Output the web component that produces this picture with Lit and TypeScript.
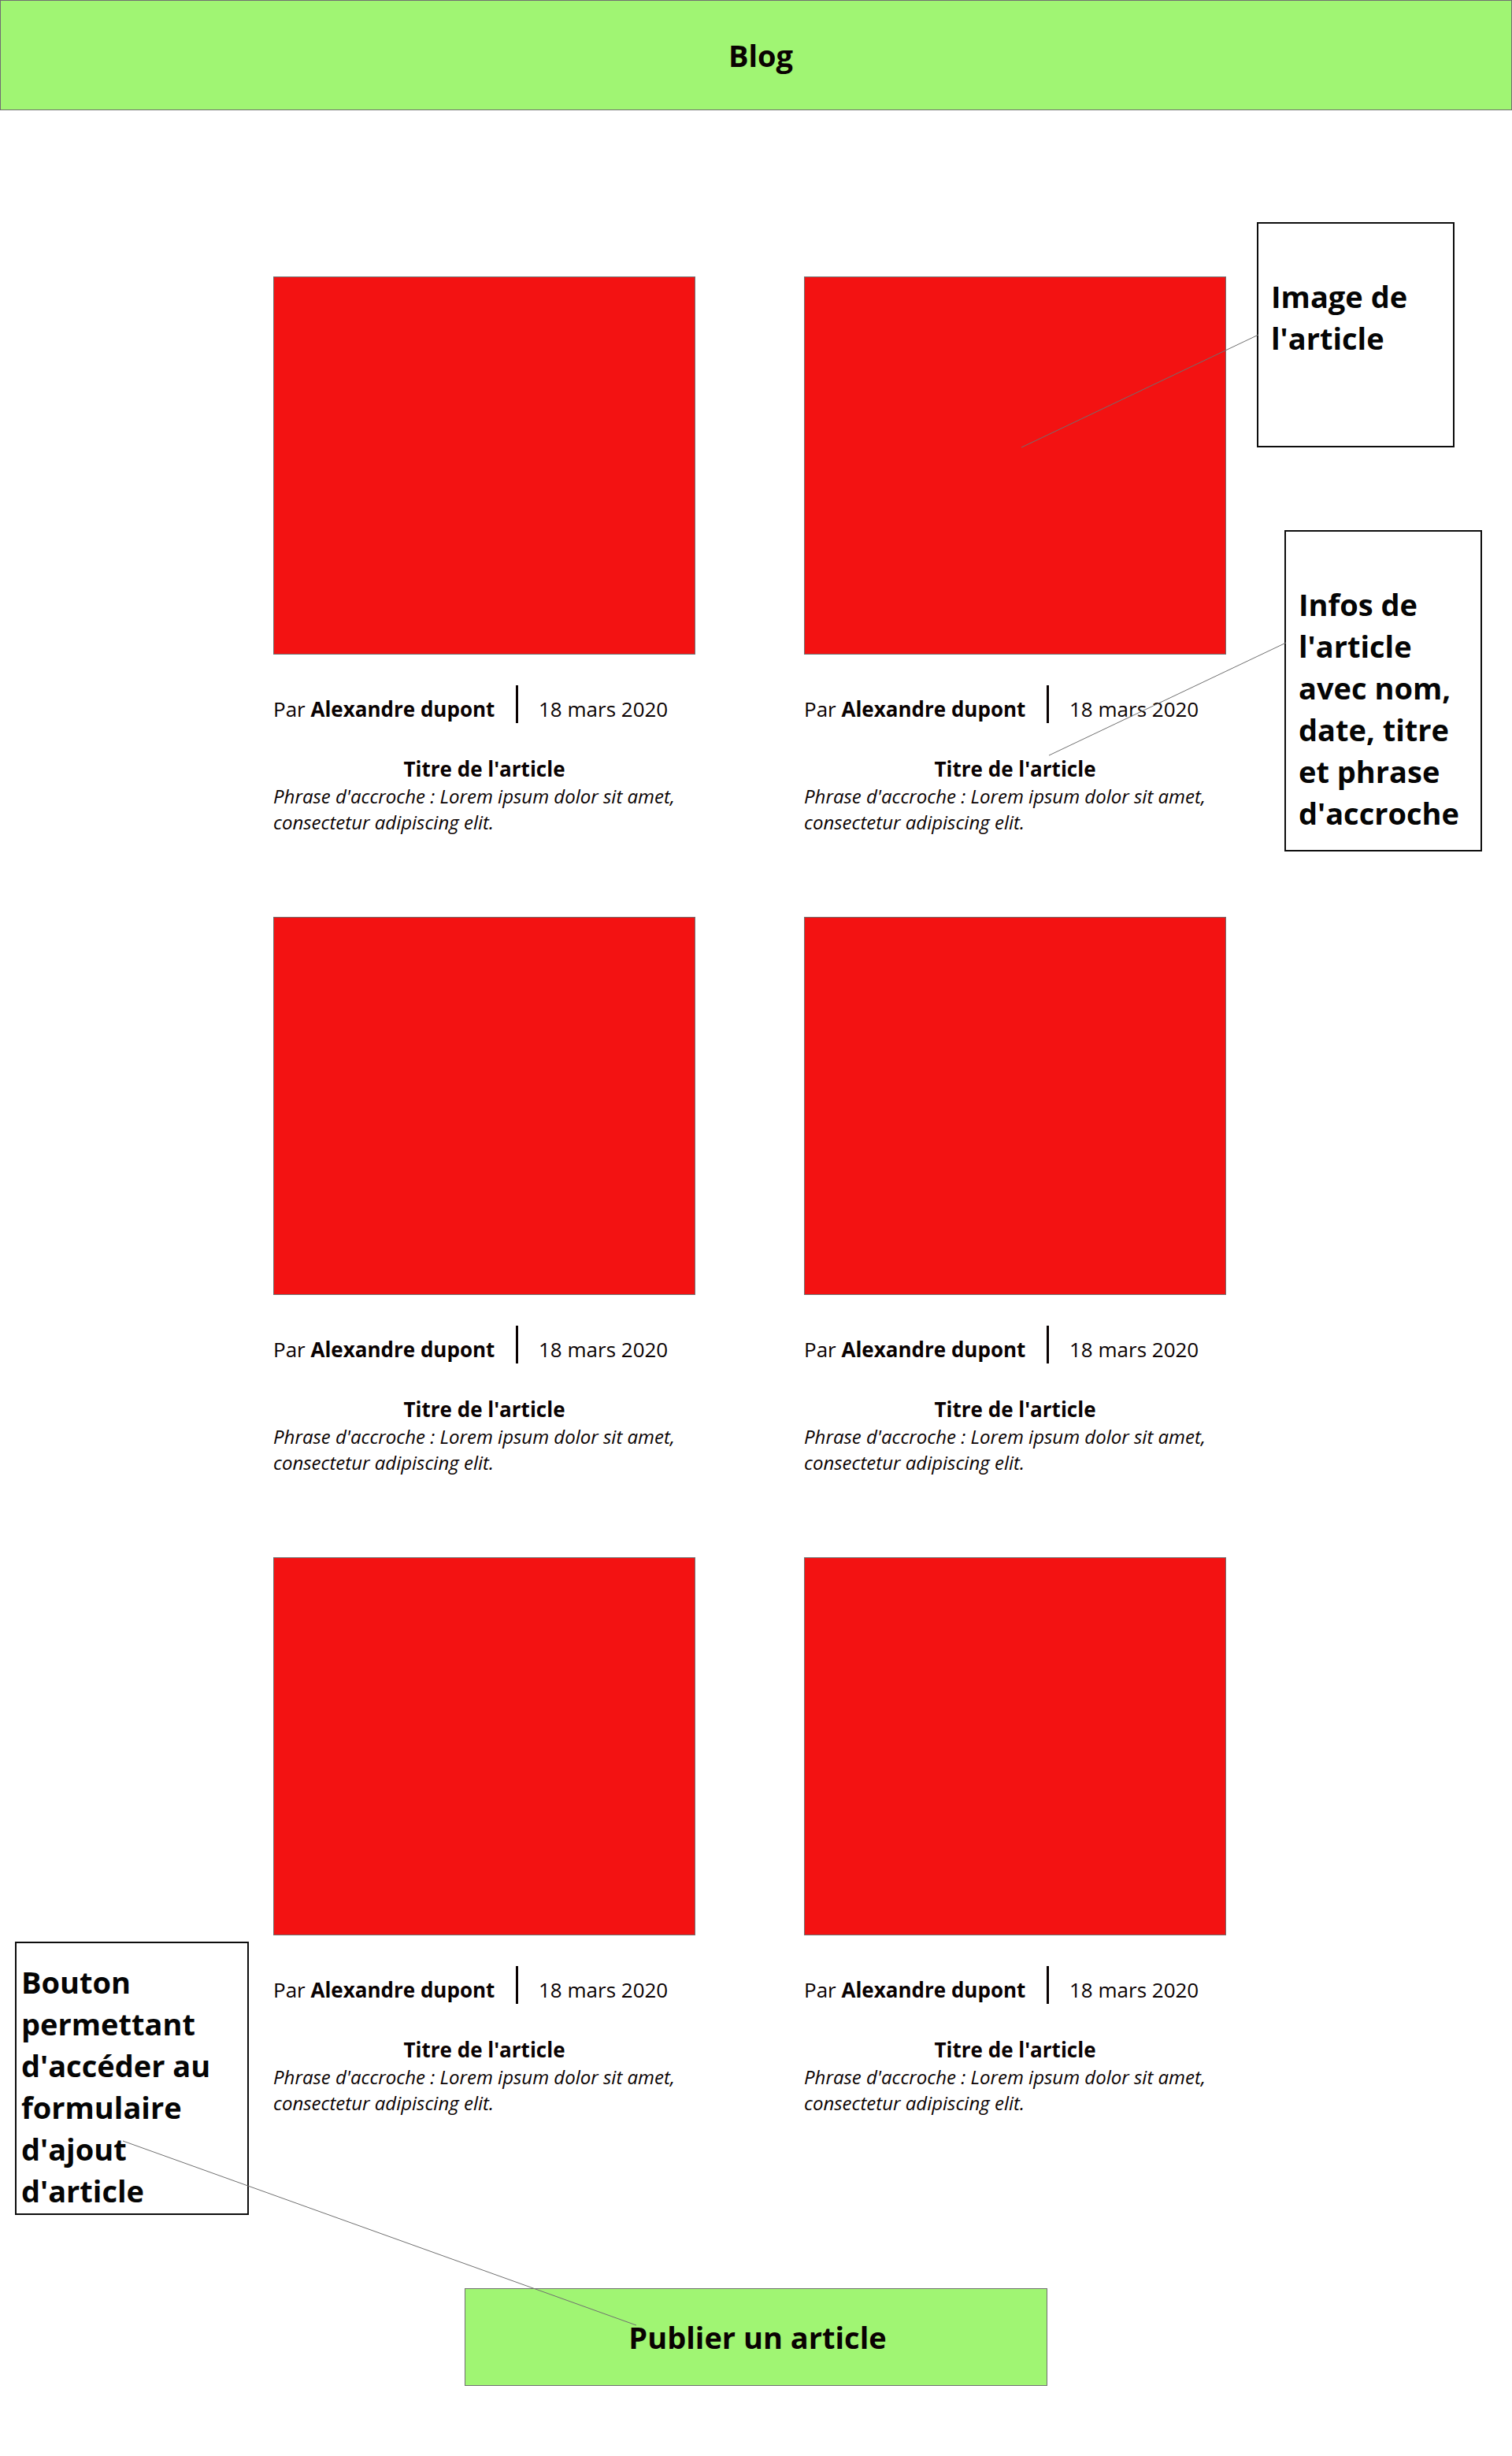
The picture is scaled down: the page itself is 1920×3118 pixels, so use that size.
import { LitElement, html, css } from "lit";
import { customElement, property } from "lit/decorators.js";

interface Article {
  author: string;
  date: string;
  title: string;
  hook: string;
}

const ARTICLES: Article[] = Array.from({ length: 6 }, () => ({
  author: "Alexandre dupont",
  date: "18 mars 2020",
  title: "Titre de l'article",
  hook: "Phrase d'accroche : Lorem ipsum dolor sit amet, consectetur adipiscing elit.",
}));

@customElement("article-card")
export class ArticleCard extends LitElement {
  @property({ attribute: false }) article!: Article;

  static styles = css`
    :host {
      display: block;
    }
    .image {
      box-sizing: border-box;
      height: 480px;
      background: #f31212;
      border: 1px solid #707070;
    }
    .meta {
      display: flex;
      align-items: flex-end;
      margin: 39px 0 40px;
      font-size: 26px;
      line-height: 36px;
    }
    .author {
      flex: 0 0 308px;
      white-space: nowrap;
    }
    .divider {
      flex: none;
      width: 3px;
      height: 48px;
      margin-right: 26px;
      background: #0a0202;
    }
    .title {
      margin: 0;
      font-size: 26px;
      line-height: 36px;
      font-weight: 700;
      text-align: center;
    }
    .hook {
      margin: 0;
      font-size: 24px;
      line-height: 33px;
      font-style: italic;
    }
  `;

  render() {
    const { author, date, title, hook } = this.article;
    return html`
      <article>
        <div class="image"></div>
        <div class="meta">
          <span class="author">Par <b>${author}</b></span>
          <span class="divider"></span>
          <time datetime="2020-03-18">${date}</time>
        </div>
        <h2 class="title">${title}</h2>
        <p class="hook">${hook}</p>
      </article>
    `;
  }
}

@customElement("app-root")
export class AppRoot extends LitElement {
  static styles = css`
    :host {
      display: block;
      position: relative;
      background: #fff;
      color: #0a0202;
      font-family: "Open Sans", "Noto Sans", sans-serif;
    }
    .header {
      display: flex;
      align-items: center;
      justify-content: center;
      box-sizing: border-box;
      height: 140px;
      padding-left: 12px;
      background: #a0f573;
      border: 1px solid #707070;
    }
    .brand {
      margin: 0;
      font-size: 38px;
      line-height: 53px;
      font-weight: 700;
    }
    .articles {
      display: grid;
      grid-template-columns: 1fr 1fr;
      gap: 104px 138px;
      padding: 211px 363px 0 347px;
    }
    .actions {
      display: flex;
      justify-content: center;
      padding: 219px 24px 89px;
    }
    .publish {
      box-sizing: border-box;
      width: 740px;
      height: 124px;
      padding: 0 0 0 4px;
      background: #a0f573;
      border: 1px solid #707070;
      color: inherit;
      font: 700 38px/53px "Open Sans", "Noto Sans", sans-serif;
      cursor: pointer;
    }
    .note {
      position: absolute;
      box-sizing: border-box;
      border: 2px solid #0d0d0d;
      color: #050505;
      font-size: 38px;
      line-height: 53px;
      font-weight: 700;
    }
    .note p {
      margin: 0;
    }
    .note-image {
      top: 282px;
      right: 73px;
      width: 251px;
      height: 286px;
      padding: 66px 16px 0;
    }
    .note-infos {
      top: 673px;
      right: 38px;
      width: 251px;
      height: 408px;
      padding: 66px 0 0 16px;
    }
    .note-button {
      top: 2465px;
      left: 19px;
      width: 297px;
      height: 347px;
      padding: 23px 6px 0;
    }
    .link {
      position: absolute;
      overflow: visible;
      fill: none;
      stroke: #707070;
      stroke-width: 1;
      pointer-events: none;
    }
    .link-left {
      top: 141px;
      right: 100%;
    }
    .link-button {
      top: 251px;
      left: 135px;
    }
  `;

  render() {
    return html`
      <header class="header"><h1 class="brand">Blog</h1></header>
      <main>
        <section class="articles">
          ${ARTICLES.map((a) => html`<article-card .article=${a}></article-card>`)}
        </section>
        <div class="actions">
          <button class="publish" type="button">Publier un article</button>
        </div>
      </main>
      <aside class="note note-image">
        <p>Image de l'article</p>
        <svg class="link link-left" width="301" height="143" aria-hidden="true">
          <line x1="301" y1="0" x2="0" y2="143" />
        </svg>
      </aside>
      <aside class="note note-infos">
        <p>Infos de l'article avec nom, date, titre et phrase d'accroche</p>
        <svg class="link link-left" width="301" height="143" aria-hidden="true">
          <line x1="301" y1="0" x2="0" y2="143" />
        </svg>
      </aside>
      <aside class="note note-button">
        <p>Bouton permettant d'accéder au formulaire d'ajout d'article</p>
        <svg class="link link-button" width="652" height="234" aria-hidden="true">
          <line x1="0" y1="0" x2="652" y2="234" />
        </svg>
      </aside>
    `;
  }
}
